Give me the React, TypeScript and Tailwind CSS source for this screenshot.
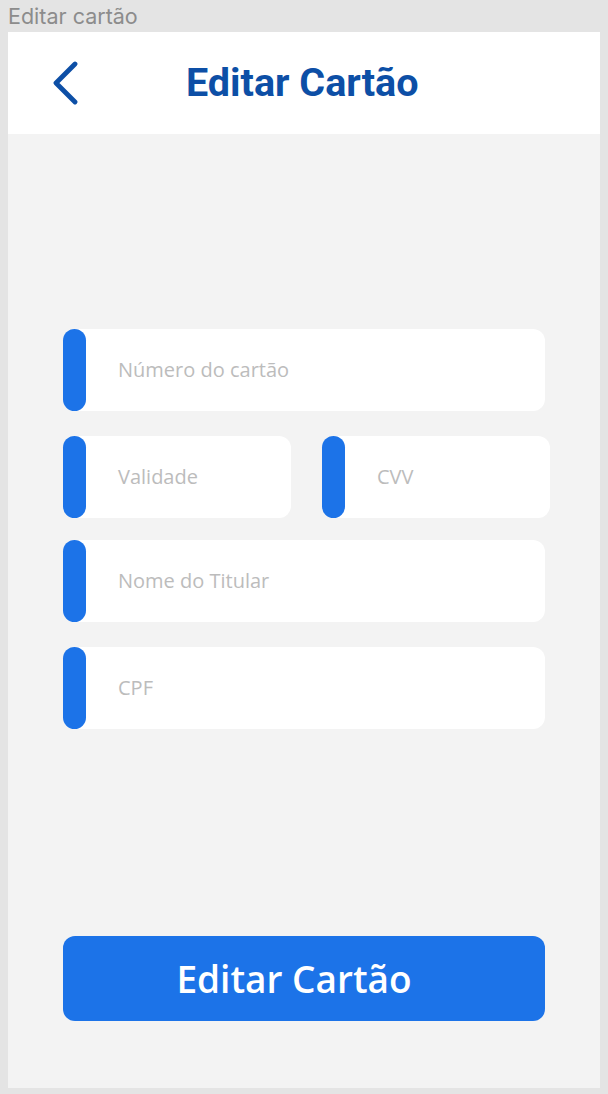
const Field = ({ label, className = "" }: { label: string; className?: string }) => (
  <div className={`flex shrink-0 h-[82px] bg-white rounded-xl items-center ${className}`}>
    <div className="w-[23px] h-full rounded-full bg-[#1c73e8]" />
    <span className="pl-8 text-[20px] text-[#bcbcbc] font-['Open_Sans',sans-serif]">{label}</span>
  </div>
);

export default function App() {
  return (
    <div className="w-[608px] h-[1094px] bg-[#e4e4e4] px-2 flex flex-col overflow-hidden">
      <div className="h-8 text-[21.5px] leading-8 text-[#8c8c8c] font-['Inter',sans-serif]">Editar cartão</div>
      <div className="h-[1056px] bg-[#f3f3f3] flex flex-col">
        <div className="h-[102px] bg-white flex items-center pl-[43px]">
          <svg width="28" height="44" viewBox="0 0 28 44" fill="none">
            <polyline points="24,3 5,22 24,41" stroke="#0d4fa6" strokeWidth="4.8" strokeLinecap="round" strokeLinejoin="round" />
          </svg>
          <h1 className="ml-[107px] text-[39.5px] font-bold text-[#0d4fa6] font-['Roboto',sans-serif]">Editar Cartão</h1>
        </div>
        <div className="flex flex-col px-[55px] pt-[195px]">
          <Field label="Número do cartão" className="w-[482px]" />
          <div className="flex gap-[31px] mt-[25px]">
            <Field label="Validade" className="w-[228px]" />
            <Field label="CVV" className="w-[228px]" />
          </div>
          <Field label="Nome do Titular" className="w-[482px] mt-[22px]" />
          <Field label="CPF" className="w-[482px] mt-[25px]" />
          <button className="mt-[207px] w-[482px] h-[85px] pr-5 rounded-xl bg-[#1c73e8] text-white text-[37px] font-semibold font-['Open_Sans',sans-serif]">
            Editar Cartão
          </button>
        </div>
      </div>
    </div>
  );
}
